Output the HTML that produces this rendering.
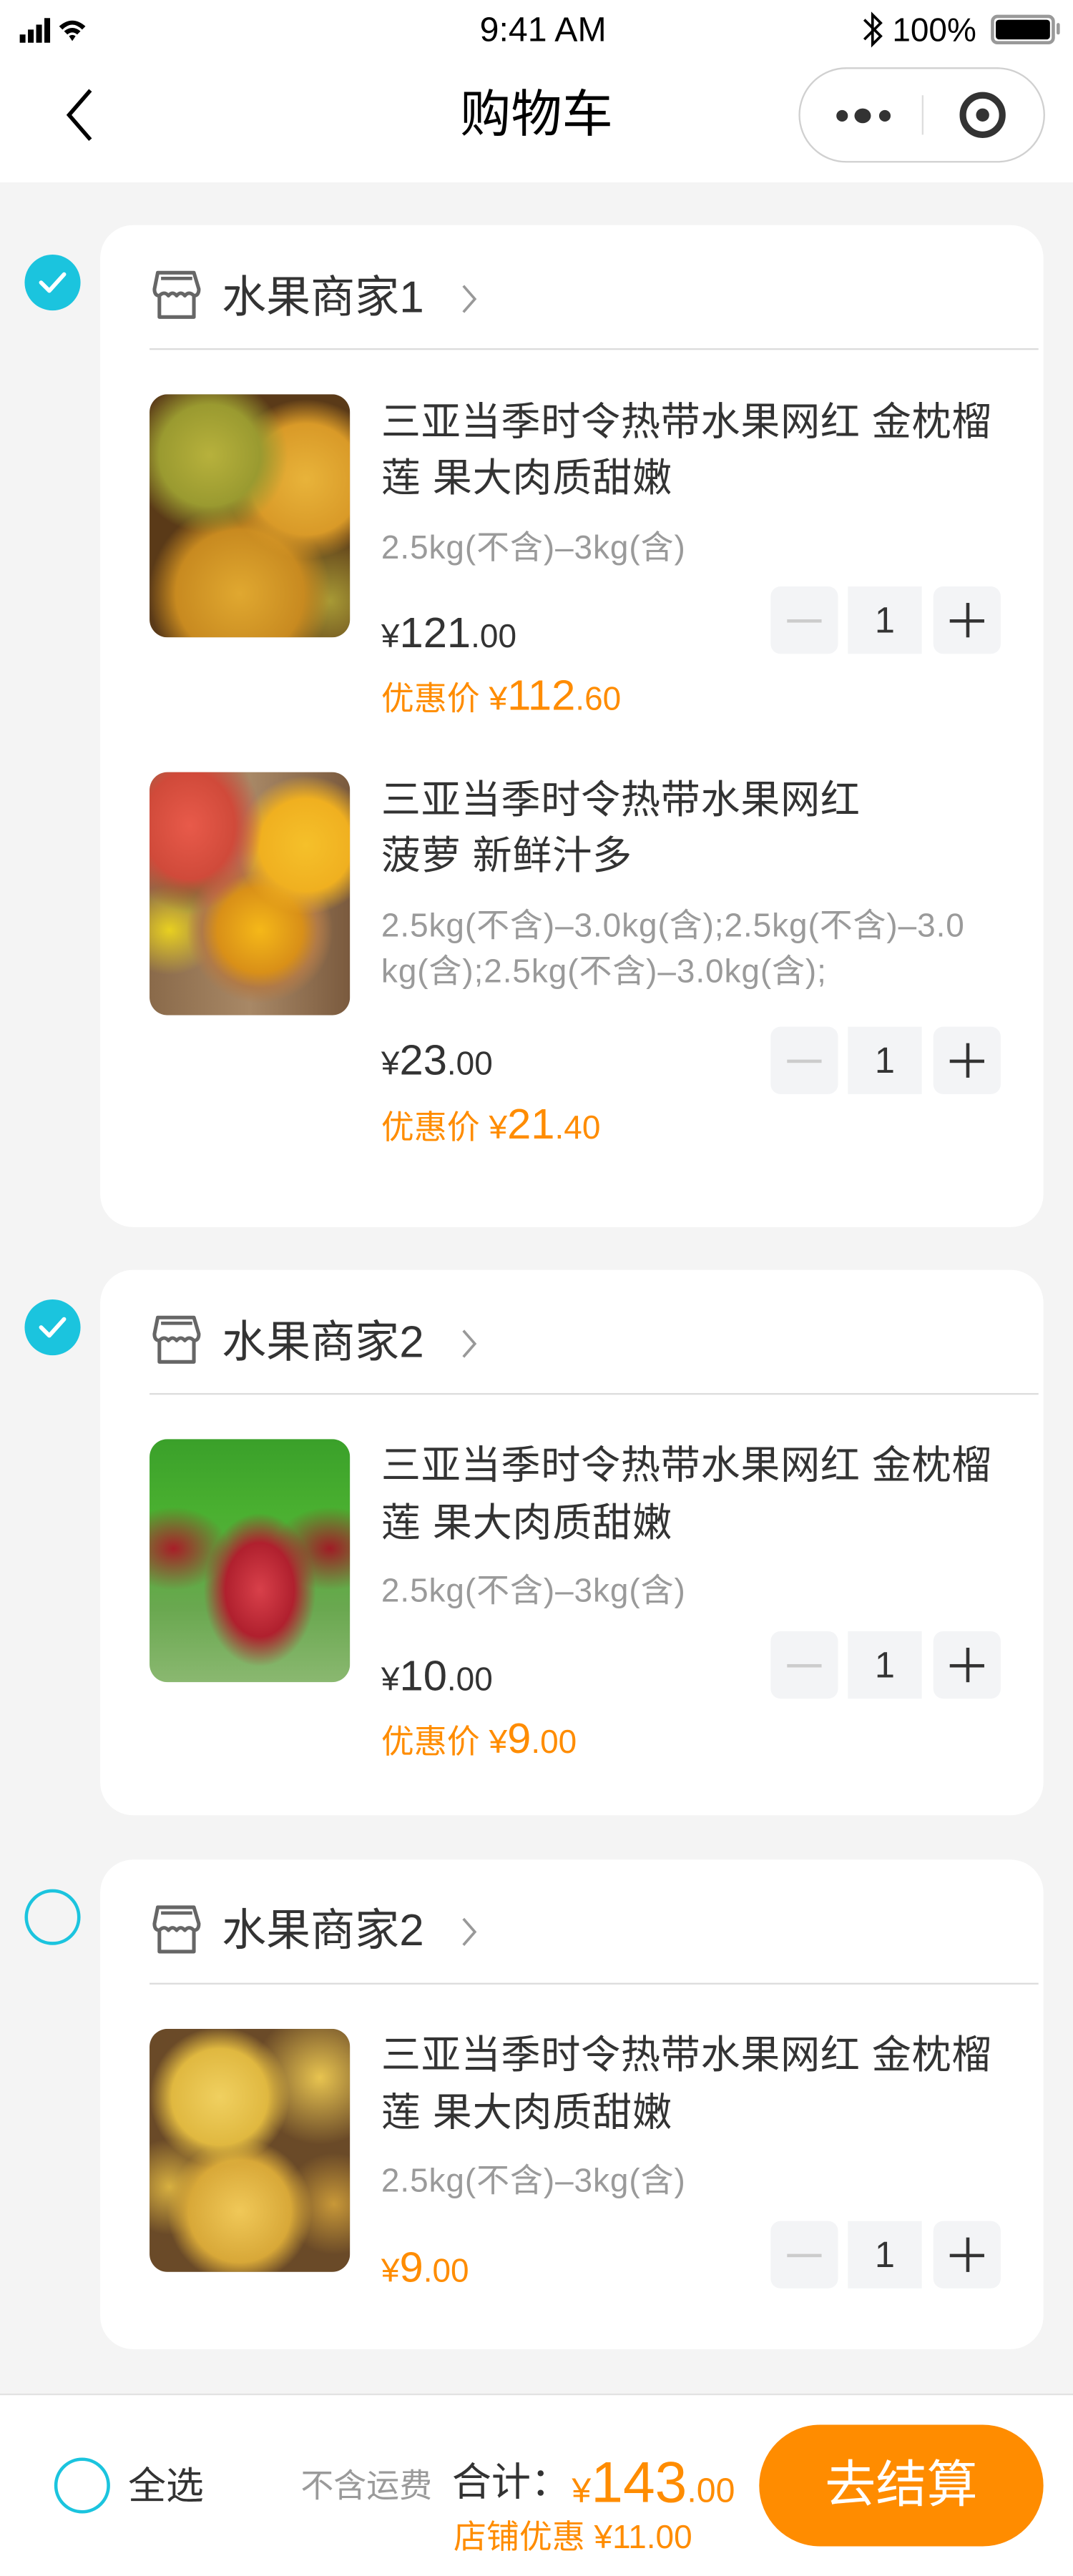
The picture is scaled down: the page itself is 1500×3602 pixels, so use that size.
<!DOCTYPE html>
<html><head><meta charset="utf-8">
<style>
*{margin:0;padding:0;box-sizing:border-box}
html,body{width:1500px;height:3600px;overflow:hidden;background:#f4f4f4}
#w{position:absolute;left:0;top:0;width:653px;height:1567.3px;transform:scale(2.29709);transform-origin:0 0;font-family:"Liberation Sans","Noto Sans CJK SC",sans-serif;color:#333}
.a{position:absolute;white-space:nowrap}
.card{position:absolute;left:61px;width:574px;background:#fff;border-radius:20px}
.chk{position:absolute;left:15px;width:34px;height:34px;border-radius:50%;background:#1bc4de}
.chk svg{position:absolute;left:8px;top:9px}
.unchk{position:absolute;width:34px;height:34px;border-radius:50%;border:2px solid #1bc4de;background:transparent}
.shop{font-size:27px;line-height:30px;color:#333}
.div{position:absolute;left:91px;width:541px;height:1px;background:#dcdcdc}
.img{position:absolute;left:91px;width:122px;height:148px;border-radius:11px;overflow:hidden}
.t{font-size:24px;line-height:30px;color:#333;letter-spacing:0.3px}
.s{font-size:20px;line-height:24px;color:#9a9a9a;letter-spacing:0.4px}
.p{font-size:20px;line-height:30px;color:#333}
.p b{font-weight:normal;font-size:26px}
.o{color:#ff8c00}
.st{position:absolute;width:41px;height:41px;background:#f3f4f6;border-radius:6px}
</style></head><body><div id="w">
<!-- top bar -->
<div class="a" style="left:0;top:0;width:653px;height:111px;background:#fff"></div>
<svg class="a" style="left:12px;top:10px" width="64" height="18" viewBox="0 0 64 18">
<rect x="0" y="11" width="3.5" height="5" fill="#000"/><rect x="5" y="8" width="3.5" height="8" fill="#000"/><rect x="10" y="5" width="3.5" height="11" fill="#000"/><rect x="15" y="1" width="3.5" height="15" fill="#000"/>
<path d="M24 6 Q32 -1 40 6 L38 8 Q32 2 26 8Z M27 9 Q32 5 37 9 L35 11 Q32 8.5 29 11Z M30 12 L32 15 L34 12 Q32 10.5 30 12Z" fill="#000"/>
</svg>
<div class="a" style="left:0;width:661px;text-align:center;top:7px;font-size:21px;line-height:24px;color:#000">9:41 AM</div>
<svg class="a" style="left:524px;top:6px" width="14" height="24" viewBox="0 0 14 24"><path d="M2 6 L12 16 L7 21 L7 3 L12 8 L2 18" fill="none" stroke="#000" stroke-width="1.6"/></svg>
<div class="a" style="left:543px;top:7px;font-size:20px;line-height:24px;color:#000">100%</div>
<div class="a" style="left:603px;top:9px;width:39px;height:18px;border:2px solid #999;border-radius:4px"></div>
<div class="a" style="left:606px;top:12px;width:33px;height:12px;background:#000;border-radius:2px"></div>
<div class="a" style="left:643px;top:14px;width:2px;height:7px;background:#999;border-radius:1px"></div>
<svg class="a" style="left:38px;top:54px" width="20" height="32" viewBox="0 0 20 32"><path d="M17 1 L4 16 L17 31" fill="none" stroke="#000" stroke-width="2.4"/></svg>
<div class="a" style="left:0;width:653px;text-align:center;top:51px;font-size:31px;line-height:38px;color:#000">购物车</div>
<div class="a" style="left:486px;top:41px;width:150px;height:58px;border:1px solid #d0d0d0;border-radius:29px;background:#fff"></div>
<div class="a" style="left:509px;top:67px;width:7px;height:7px;border-radius:50%;background:#333"></div>
<div class="a" style="left:520px;top:66px;width:10px;height:9px;border-radius:50%;background:#333"></div>
<div class="a" style="left:535px;top:67px;width:7px;height:7px;border-radius:50%;background:#333"></div>
<div class="a" style="left:561px;top:58px;width:1px;height:24px;background:#ddd"></div>
<div class="a" style="left:584px;top:56px;width:28px;height:28px;border-radius:50%;border:4px solid #333"></div>
<div class="a" style="left:594px;top:66px;width:8px;height:8px;border-radius:50%;background:#333"></div>

<!-- CARD 1 -->
<div class="card" style="top:137px;height:610px"></div>
<div class="chk" style="top:155px"><svg width="18" height="16" viewBox="0 0 18 16"><path d="M2 8 L7 13 L16 3" fill="none" stroke="#fff" stroke-width="2.5" stroke-linecap="round" stroke-linejoin="round"/></svg></div>
<svg class="a" style="left:91px;top:164px" width="33" height="32" viewBox="0 0 33 32"><path d="M5 2 H27 L30 12 Q30 16 27 16 Q24 13 21.5 16 Q19 13 16.5 16 Q14 13 11.5 16 Q9 13 6 16 Q3 16 3 12Z M6 16 V29 H27 V16" fill="none" stroke="#666" stroke-width="2.2" stroke-linejoin="round"/><path d="M7 5.5 H26" stroke="#666" stroke-width="2"/></svg>
<div class="a shop" style="left:135px;top:166px">水果商家1</div>
<svg class="a" style="left:280px;top:172px" width="12" height="20" viewBox="0 0 12 20"><path d="M2 2 L9 10 L2 18" fill="none" stroke="#999" stroke-width="1.6"/></svg>
<div class="div" style="top:212px"></div>

<div class="img" style="top:240px;background:radial-gradient(circle at 30% 25%,#b7b13c 0,#9a9a30 22%,transparent 34%),radial-gradient(circle at 78% 35%,#e8b33a 0,#d99a28 25%,transparent 36%),radial-gradient(circle at 45% 82%,#e0a830 0,#c88a20 28%,transparent 40%),radial-gradient(circle at 90% 85%,#a89a35 0,transparent 25%),#5a3a18"></div>
<div class="a t" style="left:232px;top:243px">三亚当季时令热带水果网红 金枕榴</div>
<div class="a t" style="left:232px;top:277px">莲 果大肉质甜嫩</div>
<div class="a s" style="left:232px;top:322px">2.5kg(不含)–3kg(含)</div>
<div class="a p" style="left:232px;top:370px">¥<b>121</b>.00</div>
<div class="a p o" style="left:232px;top:408px">优惠价 ¥<b>112</b>.60</div>
<div class="st" style="left:469px;top:357px"></div><div class="st" style="left:516px;top:357px;width:45px;border-radius:0"></div><div class="st" style="left:568px;top:357px"></div>
<div class="a" style="left:479px;top:377px;width:21px;height:2px;background:#ccc"></div>
<div class="a" style="left:516px;width:45px;text-align:center;top:364px;font-size:22px;line-height:28px;color:#333">1</div>
<div class="a" style="left:578px;top:377px;width:21px;height:2px;background:#333"></div><div class="a" style="left:588px;top:367px;width:2px;height:21px;background:#333"></div>

<div class="img" style="top:470px;background:radial-gradient(ellipse at 20% 22%,#e85a4a 0,#d04a3a 20%,transparent 32%),radial-gradient(circle at 78% 30%,#f5c02a 0,#f0b020 20%,transparent 30%),radial-gradient(circle at 55% 65%,#f5b818 0,#d99018 22%,#b07a48 30%,transparent 38%),radial-gradient(ellipse at 10% 65%,#e8d020 0,transparent 20%),radial-gradient(ellipse at 20% 45%,#2f8a2a 0,transparent 18%),linear-gradient(90deg,#8a6a4a,#a88866 50%,#7a5a3e)"></div>
<div class="a t" style="left:232px;top:473px">三亚当季时令热带水果网红</div>
<div class="a t" style="left:232px;top:507px">菠萝 新鲜汁多</div>
<div class="a s" style="left:232px;top:552px">2.5kg(不含)–3.0kg(含);2.5kg(不含)–3.0</div>
<div class="a s" style="left:232px;top:580px">kg(含);2.5kg(不含)–3.0kg(含);</div>
<div class="a p" style="left:232px;top:630px">¥<b>23</b>.00</div>
<div class="a p o" style="left:232px;top:669px">优惠价 ¥<b>21</b>.40</div>
<div class="st" style="left:469px;top:625px"></div><div class="st" style="left:516px;top:625px;width:45px;border-radius:0"></div><div class="st" style="left:568px;top:625px"></div>
<div class="a" style="left:479px;top:645px;width:21px;height:2px;background:#ccc"></div>
<div class="a" style="left:516px;width:45px;text-align:center;top:632px;font-size:22px;line-height:28px;color:#333">1</div>
<div class="a" style="left:578px;top:645px;width:21px;height:2px;background:#333"></div><div class="a" style="left:588px;top:635px;width:2px;height:21px;background:#333"></div>

<!-- CARD 2 -->
<div class="card" style="top:773px;height:332px"></div>
<div class="chk" style="top:791px"><svg width="18" height="16" viewBox="0 0 18 16"><path d="M2 8 L7 13 L16 3" fill="none" stroke="#fff" stroke-width="2.5" stroke-linecap="round" stroke-linejoin="round"/></svg></div>
<svg class="a" style="left:91px;top:800px" width="33" height="32" viewBox="0 0 33 32"><path d="M5 2 H27 L30 12 Q30 16 27 16 Q24 13 21.5 16 Q19 13 16.5 16 Q14 13 11.5 16 Q9 13 6 16 Q3 16 3 12Z M6 16 V29 H27 V16" fill="none" stroke="#666" stroke-width="2.2" stroke-linejoin="round"/><path d="M7 5.5 H26" stroke="#666" stroke-width="2"/></svg>
<div class="a shop" style="left:135px;top:802px">水果商家2</div>
<svg class="a" style="left:280px;top:808px" width="12" height="20" viewBox="0 0 12 20"><path d="M2 2 L9 10 L2 18" fill="none" stroke="#999" stroke-width="1.6"/></svg>
<div class="div" style="top:848px"></div>
<div class="img" style="top:876px;background:radial-gradient(ellipse at 55% 62%,#d8404a 0,#b0202e 22%,transparent 36%),radial-gradient(ellipse at 12% 45%,#a81e28 0,transparent 22%),radial-gradient(ellipse at 90% 45%,#a01c26 0,transparent 22%),linear-gradient(180deg,#3aa02a 0,#4ab030 30%,#6aa850 70%,#8ab870)"></div>
<div class="a t" style="left:232px;top:878px">三亚当季时令热带水果网红 金枕榴</div>
<div class="a t" style="left:232px;top:913px">莲 果大肉质甜嫩</div>
<div class="a s" style="left:232px;top:957px">2.5kg(不含)–3kg(含)</div>
<div class="a p" style="left:232px;top:1005px">¥<b>10</b>.00</div>
<div class="a p o" style="left:232px;top:1043px">优惠价 ¥<b>9</b>.00</div>
<div class="st" style="left:469px;top:993px"></div><div class="st" style="left:516px;top:993px;width:45px;border-radius:0"></div><div class="st" style="left:568px;top:993px"></div>
<div class="a" style="left:479px;top:1013px;width:21px;height:2px;background:#ccc"></div>
<div class="a" style="left:516px;width:45px;text-align:center;top:1000px;font-size:22px;line-height:28px;color:#333">1</div>
<div class="a" style="left:578px;top:1013px;width:21px;height:2px;background:#333"></div><div class="a" style="left:588px;top:1003px;width:2px;height:21px;background:#333"></div>

<!-- CARD 3 -->
<div class="card" style="top:1132px;height:298px"></div>
<div class="unchk" style="left:15px;top:1150px"></div>
<svg class="a" style="left:91px;top:1159px" width="33" height="32" viewBox="0 0 33 32"><path d="M5 2 H27 L30 12 Q30 16 27 16 Q24 13 21.5 16 Q19 13 16.5 16 Q14 13 11.5 16 Q9 13 6 16 Q3 16 3 12Z M6 16 V29 H27 V16" fill="none" stroke="#666" stroke-width="2.2" stroke-linejoin="round"/><path d="M7 5.5 H26" stroke="#666" stroke-width="2"/></svg>
<div class="a shop" style="left:135px;top:1160px">水果商家2</div>
<svg class="a" style="left:280px;top:1166px" width="12" height="20" viewBox="0 0 12 20"><path d="M2 2 L9 10 L2 18" fill="none" stroke="#999" stroke-width="1.6"/></svg>
<div class="div" style="top:1207px"></div>
<div class="img" style="top:1235px;background:radial-gradient(circle at 35% 28%,#f0d060 0,#e0b840 22%,transparent 32%),radial-gradient(circle at 85% 20%,#e8c450 0,transparent 26%),radial-gradient(circle at 45% 75%,#f0c858 0,#d8a838 24%,transparent 34%),radial-gradient(circle at 10% 65%,#d8b040 0,transparent 20%),radial-gradient(circle at 92% 72%,#c89838 0,transparent 20%),#6a4a28"></div>
<div class="a t" style="left:232px;top:1237px">三亚当季时令热带水果网红 金枕榴</div>
<div class="a t" style="left:232px;top:1272px">莲 果大肉质甜嫩</div>
<div class="a s" style="left:232px;top:1316px">2.5kg(不含)–3kg(含)</div>
<div class="a p o" style="left:232px;top:1365px">¥<b>9</b>.00</div>
<div class="st" style="left:469px;top:1352px"></div><div class="st" style="left:516px;top:1352px;width:45px;border-radius:0"></div><div class="st" style="left:568px;top:1352px"></div>
<div class="a" style="left:479px;top:1372px;width:21px;height:2px;background:#ccc"></div>
<div class="a" style="left:516px;width:45px;text-align:center;top:1359px;font-size:22px;line-height:28px;color:#333">1</div>
<div class="a" style="left:578px;top:1372px;width:21px;height:2px;background:#333"></div><div class="a" style="left:588px;top:1362px;width:2px;height:21px;background:#333"></div>

<!-- bottom bar -->
<div class="a" style="left:0;top:1457px;width:653px;height:111px;background:#fff;border-top:1px solid #e2e2e2"></div>
<div class="unchk" style="left:33px;top:1496px"></div>
<div class="a" style="left:78px;top:1499px;font-size:23px;line-height:28px;color:#333">全选</div>
<div class="a" style="left:183px;top:1502px;font-size:20px;line-height:24px;color:#9a9a9a">不含运费</div>
<div class="a" style="left:275px;top:1498px;font-size:24px;line-height:28px;color:#333">合计：</div>
<div class="a o" style="left:348px;top:1493px;font-size:21px;line-height:38px">¥<b style="font-weight:normal;font-size:35px">143</b>.00</div>
<div class="a o" style="left:276px;top:1533px;font-size:20px;line-height:24px">店铺优惠 ¥11.00</div>
<div class="a" style="left:462px;top:1476px;width:173px;height:74px;border-radius:37px;background:#ff8c00;color:#fff;font-size:31px;line-height:74px;text-align:center">去结算</div>
</div></body></html>
